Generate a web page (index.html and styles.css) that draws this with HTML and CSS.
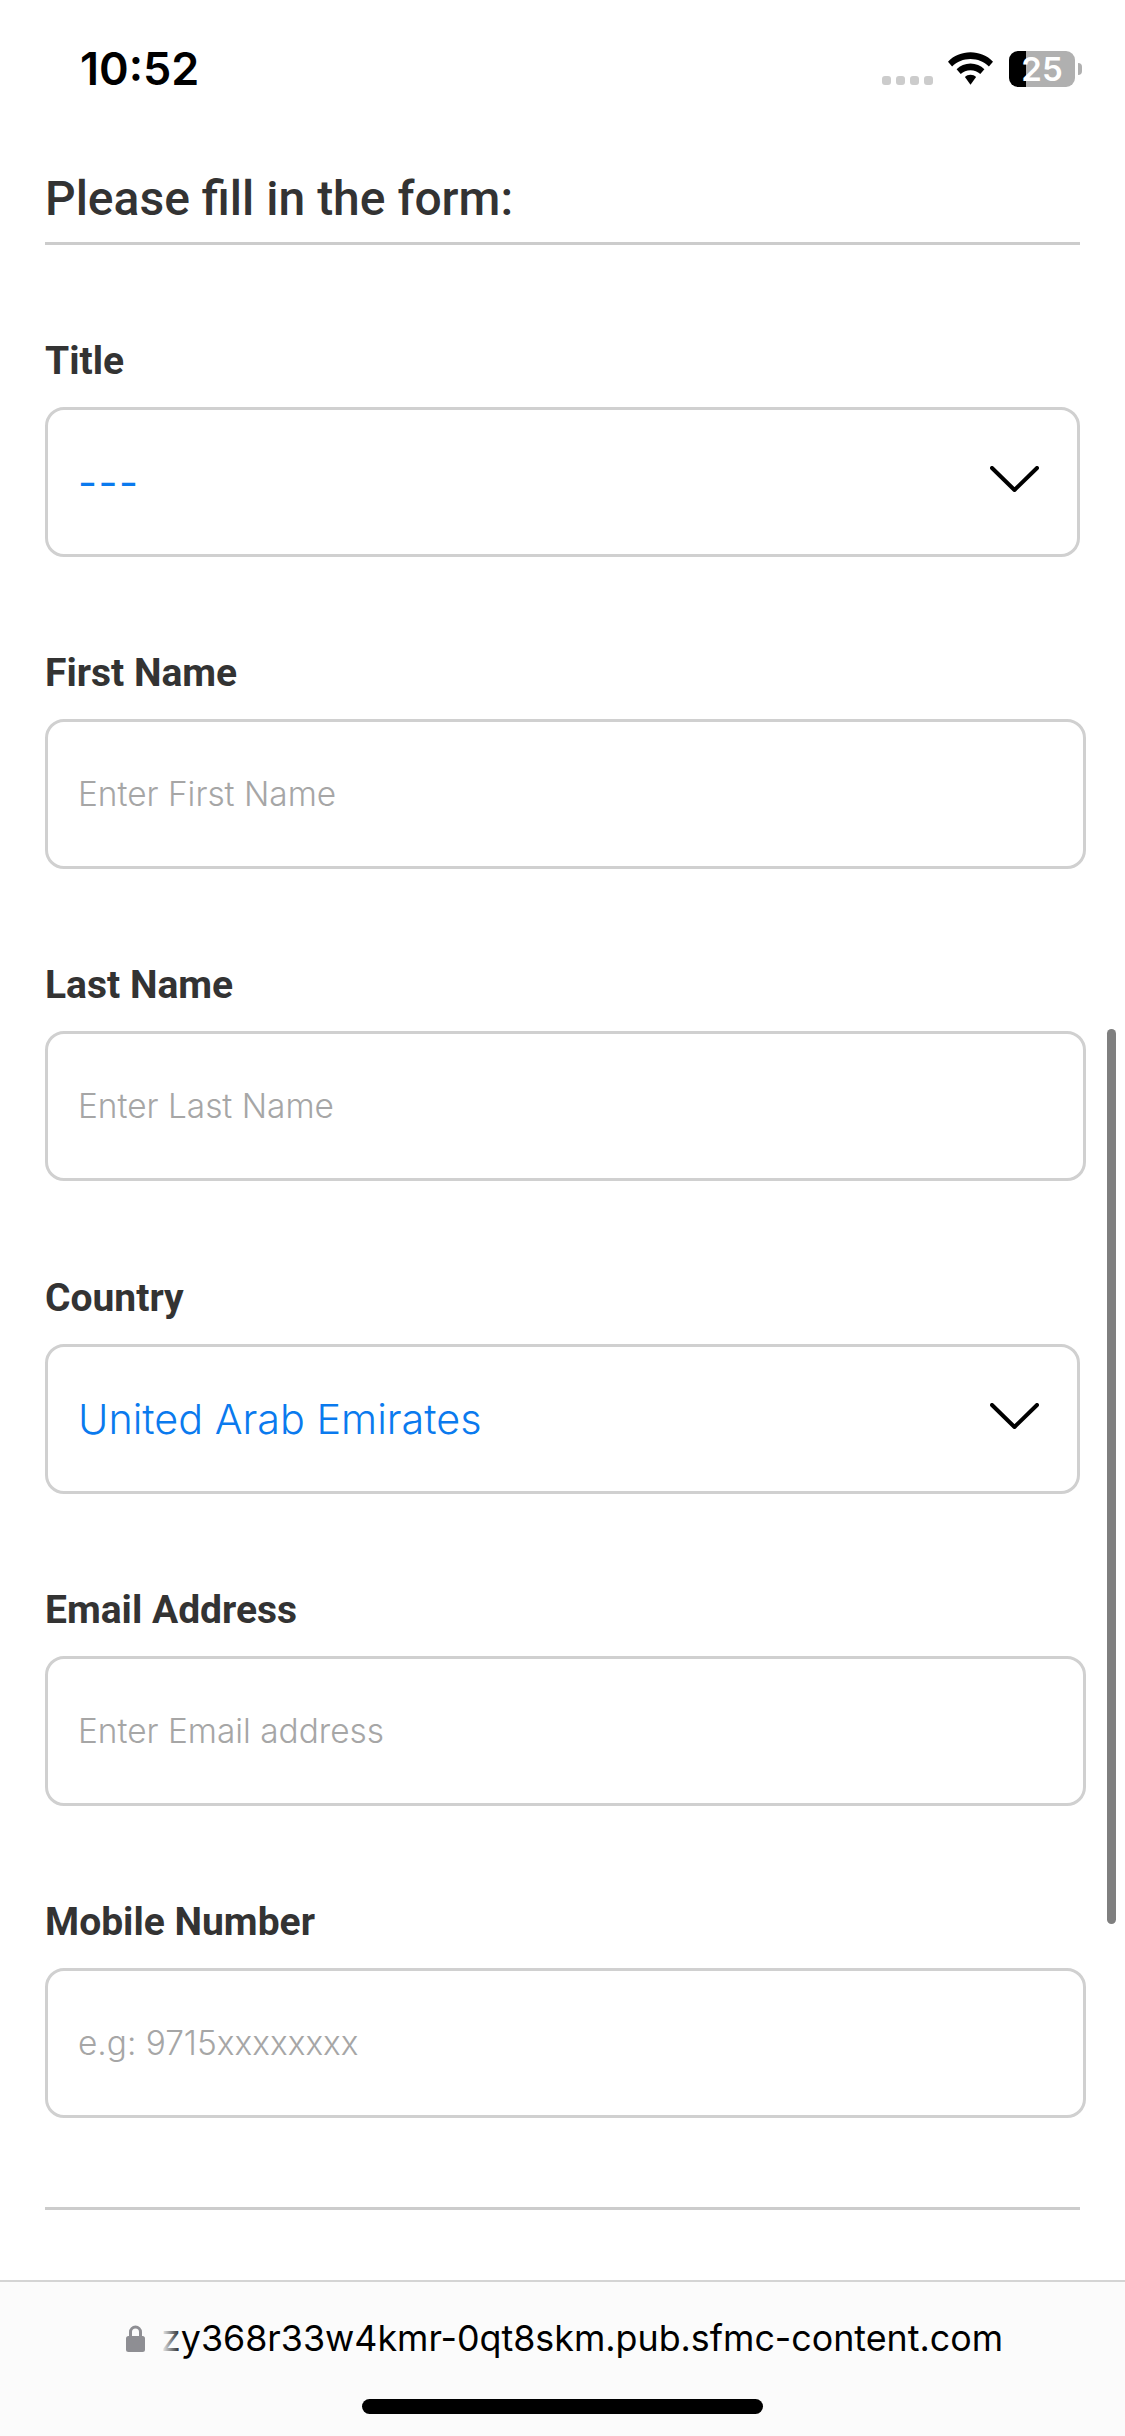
FILE: index.html
```html
<!DOCTYPE html>
<html lang="en">
<head>
<meta charset="utf-8">
<title>Form</title>
<link rel="stylesheet" href="styles.css">
</head>
<body>
<div class="screen">
  <header class="status">
    <span class="time">10:52</span>
    <div class="status-icons">
      <div class="dots"><i></i><i></i><i></i><i></i></div>
      <svg class="wifi" viewBox="0 0 46 33"><path d="M23 0C14 0 6 3.500 0 9.500L4.200 14.500C9.200 9.600 15.800 6.800 23 6.800S36.800 9.600 41.800 14.500L46 9.500C40 3.500 32 0 23 0Z"/><path d="M23 11.500C17.500 11.500 12.500 13.700 8.800 17.300L13 22.200C15.600 19.700 19.100 18.200 23 18.200S30.400 19.700 33 22.200L37.200 17.300C33.500 13.700 28.500 11.500 23 11.500Z"/><path d="M23 23C20.800 23 18.800 23.800 17.300 25.200L23 33L28.700 25.200C27.200 23.800 25.200 23 23 23Z"/></svg>
      <div class="battery">
        <div class="battery-body"><span class="battery-level">25</span></div>
        <div class="battery-cap"></div>
      </div>
    </div>
  </header>

  <main class="content">
    <h1 class="heading">Please fill in the form:</h1>
    <form class="form">
      <div class="field">
        <label class="label">Title</label>
        <div class="box box-select"><span class="value value-dash">---</span>
          <svg class="chevron" viewBox="0 0 49 26"><path d="M2 2L24.500 24L47 2"/></svg></div>
      </div>
      <div class="field">
        <label class="label">First Name</label>
        <div class="box"><span class="placeholder">Enter First Name</span></div>
      </div>
      <div class="field">
        <label class="label">Last Name</label>
        <div class="box"><span class="placeholder">Enter Last Name</span></div>
      </div>
      <div class="field">
        <label class="label">Country</label>
        <div class="box box-select"><span class="value">United Arab Emirates</span>
          <svg class="chevron" viewBox="0 0 49 26"><path d="M2 2L24.500 24L47 2"/></svg></div>
      </div>
      <div class="field">
        <label class="label">Email Address</label>
        <div class="box"><span class="placeholder">Enter Email address</span></div>
      </div>
      <div class="field">
        <label class="label">Mobile Number</label>
        <div class="box"><span class="placeholder">e.g: 9715xxxxxxxx</span></div>
      </div>
    </form>
    <hr class="rule">
  </main>

  <div class="scrollbar"></div>

  <footer class="urlbar">
    <div class="url-row">
      <svg class="lock" viewBox="0 0 19 27"><path class="shackle" d="M4.500 12V7a5 5 0 0 1 10 0V12"/><rect y="11" width="19" height="16" rx="2.500"/></svg>
      <div class="url-clip"><span class="url">zy368r33w4kmr-0qt8skm.pub.sfmc-content.com</span></div>
    </div>
    <div class="home"></div>
  </footer>
</div>
</body>
</html>
```
FILE: styles.css
```css
* { box-sizing: border-box; }
html, body { margin: 0; padding: 0; background: #fff; }
.screen {
  position: relative;
  width: 1125px;
  height: 2436px;
  overflow: hidden;
  display: flex;
  flex-direction: column;
  background: #fff;
  font-family: Roboto, "Liberation Sans", sans-serif;
}
.status {
  height: 136px;
  flex: none;
  display: flex;
  justify-content: space-between;
  align-items: flex-start;
  padding: 42px 43px 0 80px;
}
.time {
  margin-top: 1px;
  font-family: Inter, sans-serif;
  font-weight: 600;
  font-size: 45px;
  line-height: 52px;
  color: #000;
}
.status-icons { display: flex; align-items: flex-start; padding-top: 9px; }
.dots { display: flex; gap: 5px; margin-top: 25px; margin-right: 15px; }
.dots i { display: block; width: 9px; height: 9px; border-radius: 3px; background: #ccc; }
.wifi { display: block; width: 45px; height: 33px; margin-top: 1px; margin-right: 16px; fill: #000; }
.battery { display: flex; align-items: center; }
.battery-body {
  width: 66px;
  height: 36px;
  border-radius: 9px;
  display: flex;
  align-items: center;
  justify-content: center;
  background: linear-gradient(to right, #000 0 17px, #b0b0b0 17px);
}
.battery-level { font-family: Inter, sans-serif; font-weight: 600; font-size: 33px; line-height: 36px; color: #fff; }
.battery-cap { width: 4px; height: 12px; margin-left: 3px; border-radius: 0 6px 6px 0; background: #b0b0b0; }

.content { flex: none; padding: 0 39px 0 45px; }
.heading {
  margin: 0;
  height: 109px;
  padding-top: 35px;
  font-size: 48px;
  line-height: 56px;
  font-weight: 500;
  color: #333;
  width: 1035px;
  border-bottom: 3px solid #ccc;
}
.form { display: flex; flex-direction: column; }
.field { height: 312.200px; display: flex; flex-direction: column; flex: none; }
.label {
  display: block;
  margin-top: 93px;
  font-size: 39px;
  line-height: 46px;
  height: 46px;
  font-weight: 700;
  color: #333;
}
.box {
  margin-top: 23px;
  height: 150px;
  flex: none;
  border: 3px solid #d0d0d0;
  border-radius: 19px;
  display: flex;
  align-items: center;
  justify-content: space-between;
  padding: 0 30px;
  background: #fff;
}
.box-select { width: 1035px; padding-right: 38px; }
.value { font-family: Inter, sans-serif; font-weight: 300; font-size: 41.300px; color: #0a7aee; }
.value-dash { font-weight: 400; letter-spacing: 1.500px; }
.placeholder { font-family: Inter, sans-serif; font-weight: 300; font-size: 33.400px; color: #a6a6a6; }
.chevron { width: 49px; height: 26px; margin-bottom: 6px; fill: none; stroke: #000; stroke-width: 4px; stroke-linecap: round; stroke-linejoin: round; }
.rule { margin: 89px 0 0; height: 3px; width: 1035px; border: 0; background: #ccc; }

.scrollbar {
  position: absolute;
  left: 1107px;
  top: 1029px;
  width: 9px;
  height: 895px;
  border-radius: 5px;
  background: #7f7f7f;
}
.urlbar {
  position: absolute;
  left: 0;
  right: 0;
  top: 2280px;
  bottom: 0;
  border-top: 2px solid #d4d4d4;
  background: #fbfbfb;
  display: flex;
  flex-direction: column;
  align-items: center;
}
.url-row { display: flex; align-items: flex-start; width: 100%; padding-left: 126px; margin-top: 34px; }
.lock { display: block; width: 19px; height: 27px; margin-top: 9px; fill: #8e8e93; flex: none; }
.lock .shackle { fill: none; stroke: #8e8e93; stroke-width: 3px; }
.url-clip { position: relative; margin-left: 16px; }
.url-clip::before {
  content: "";
  position: absolute;
  left: 0; top: 0; bottom: 0;
  width: 22px;
  background: linear-gradient(to right, #fbfbfb, rgba(251,251,251,0));
}
.url { font-family: Inter, sans-serif; font-size: 35.800px; line-height: 44px; color: #000; white-space: nowrap; display: block; }
.home { width: 401px; height: 15px; margin-top: 39px; border-radius: 8px; background: #000; }
```
